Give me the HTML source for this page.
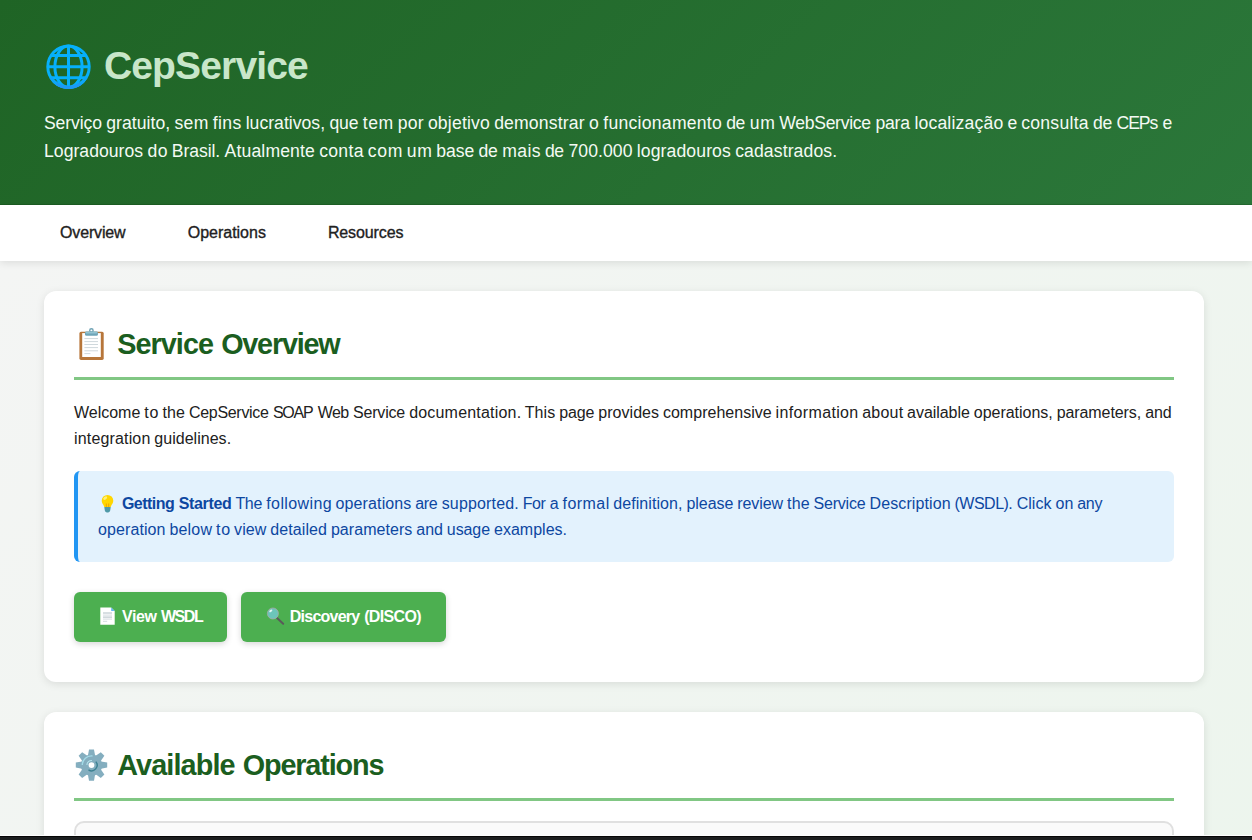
<!DOCTYPE html>
<html lang="en">
<head>
<meta charset="utf-8">
<title>CepService Web Service</title>
<style>
*{box-sizing:border-box;margin:0;padding:0}
html,body{width:1252px;height:840px;overflow:hidden}
body{font-family:"Liberation Sans",sans-serif;font-size:16px;line-height:25.6px;color:#212121;background:#eef5ef linear-gradient(135deg,#f5f5f5 0%,#e8f5e9 100%) 0 0/1252px 2050px no-repeat;position:relative}
.abs{position:absolute;white-space:nowrap}
svg{position:absolute;overflow:visible}
.header{position:absolute;left:0;top:0;width:1252px;height:205px;background:linear-gradient(135deg,#1f6425 0%,#2b773a 100%);color:#fff}
.header h1{left:0;top:40px;height:52px;line-height:52px;font-size:39px;font-weight:bold;color:#c8e6c9;}
.header p{left:44px;font-size:17.6px;line-height:28px;color:#f4faf4}
.nav{position:absolute;left:0;top:205px;width:1252px;height:56px;background:#fff;box-shadow:0 2px 8px rgba(0,0,0,.1)}
.nav a{top:15px;line-height:25.6px;font-size:16px;color:#212121;text-decoration:none;-webkit-text-stroke:.35px #212121}
.card{position:absolute;left:44px;width:1160px;background:#fff;border-radius:12px;box-shadow:0 2px 8px rgba(0,0,0,.1)}
.rule{position:absolute;left:30px;width:1100px;height:3px;background:#81c784}
h2{left:0;font-size:28.8px;line-height:46px;font-weight:bold;color:#1b5e20}
.info{position:absolute;left:30px;top:180px;width:1100px;height:91.2px;background:#e3f2fd;border-left:4px solid #2196f3;border-radius:6px;color:#0d47a1}
.btn{position:absolute;top:301.4px;height:49.6px;background:#4caf50;border-radius:6px;box-shadow:0 2px 6px rgba(0,0,0,.16);color:#fff;font-weight:bold;font-size:16px}
.btn span{top:12px;line-height:25.6px}
.op{position:absolute;left:30px;top:109px;width:1100px;height:120px;border:2px solid #e0e0e0;border-radius:10px;background:#fafafa}
.bar{position:absolute;left:0;top:836px;width:1252px;height:4px;background:#1b1d1e;border-top:1px solid #060606}
.barw{position:absolute;left:0;top:835px;width:1252px;height:1px;background:#fdfdfd}

.ln{left:0;width:0}.ln span{position:absolute;top:0;left:0}.ln .b{font-weight:bold}
</style>
</head>
<body>
<div class="header">
  <svg id="globe" style="left:44px;top:43px" width="48" height="48" viewBox="0 0 48 48"><g fill="none" stroke="#06b0fb" stroke-width="3"><circle cx="24.5" cy="23.7" r="20.7"/><ellipse cx="24.5" cy="23.7" rx="13.6" ry="20.7"/><path d="M24.5 3v41.4M3.8 23.7h41.4M7.2 12.6h34.6M7.2 34.8h34.6"/><path d="M6.57 34.05A20.7 20.7 0 0 0 42.43 34.05" stroke="#0ea6f8"/><path d="M12.63 40.66A20.7 20.7 0 0 0 36.37 40.66" stroke="#1e98f3"/></g></svg>
  <h1 class="abs ln"><span style="left:103.94px;letter-spacing:-0.853px">CepService</span></h1>
  <p class="abs ln" id="hp1" style="top:109px"><span style="left:0.00px;letter-spacing:-0.122px">Serviço</span> <span style="left:62.30px;letter-spacing:0.039px">gratuito,</span> <span style="left:130.53px;letter-spacing:0.305px">sem</span> <span style="left:168.73px;letter-spacing:0.393px">fins</span> <span style="left:201.66px;letter-spacing:0.019px">lucrativos,</span> <span style="left:285.39px;letter-spacing:-0.155px">que</span> <span style="left:318.78px;letter-spacing:0.593px">tem</span> <span style="left:353.66px;letter-spacing:0.226px">por</span> <span style="left:383.91px;letter-spacing:0.181px">objetivo</span> <span style="left:450.17px;letter-spacing:0.162px">demonstrar</span> <span style="left:544.95px;letter-spacing:0.000px">o</span> <span style="left:559.36px;letter-spacing:0.252px">funcionamento</span> <span style="left:682.16px;letter-spacing:-0.318px">de</span> <span style="left:705.77px;letter-spacing:0.687px">um</span> <span style="left:735.27px;letter-spacing:-0.305px">WebService</span> <span style="left:831.41px;letter-spacing:-0.190px">para</span> <span style="left:870.41px;letter-spacing:0.173px">localização</span> <span style="left:963.53px;letter-spacing:0.000px">e</span> <span style="left:977.22px;letter-spacing:0.261px">consulta</span> <span style="left:1048.94px;letter-spacing:-0.318px">de</span> <span style="left:1072.55px;letter-spacing:-1.115px">CEPs</span> <span style="left:1118.55px;letter-spacing:0.000px">e</span></p>
  <p class="abs ln" id="hp2" style="top:137px"><span style="left:0.00px;letter-spacing:0.034px">Logradouros</span> <span style="left:103.50px;letter-spacing:0.392px">do</span> <span style="left:127.81px;letter-spacing:-0.075px">Brasil.</span> <span style="left:180.61px;letter-spacing:0.133px">Atualmente</span> <span style="left:275.16px;letter-spacing:0.316px">conta</span> <span style="left:323.81px;letter-spacing:0.720px">com</span> <span style="left:362.84px;letter-spacing:0.687px">um</span> <span style="left:392.34px;letter-spacing:-0.092px">base</span> <span style="left:434.56px;letter-spacing:-0.308px">de</span> <span style="left:458.17px;letter-spacing:0.408px">mais</span> <span style="left:500.89px;letter-spacing:-0.298px">de</span> <span style="left:524.52px;letter-spacing:0.062px">700.000</span> <span style="left:592.84px;letter-spacing:0.104px">logradouros</span> <span style="left:691.14px;letter-spacing:0.114px">cadastrados.</span></p>
</div>
<div style="position:absolute;left:0;top:204px;width:1252px;height:1px;background:rgba(0,40,0,.17)"></div>
<div class="nav">
  <a class="abs ln" id="n1"><span style="left:60.00px;letter-spacing:-0.143px">Overview</span></a>
  <a class="abs ln" id="n2"><span style="left:187.69px;letter-spacing:-0.005px">Operations</span></a>
  <a class="abs ln" id="n3"><span style="left:327.91px;letter-spacing:-0.122px">Resources</span></a>
</div>
<div class="card" style="top:291px;height:391px">
  <svg id="clip" style="left:33px;top:35px" width="30" height="36" viewBox="0 0 30 36"><rect x="2.4" y="5.8" width="24.3" height="28.1" rx="1.6" fill="#b7763a"/><rect x="5.2" y="7.1" width="18.6" height="23.9" fill="#fff"/><g stroke="#cfd8dc" stroke-width="1"><path d="M7.4 12.6h13.6M7.4 15.6h13.6M7.4 18.5h13.6M7.4 21.6h13.6M7.4 24.8h13.6M7.4 27.6h6"/></g><circle cx="14.4" cy="4.500" r="1.700" fill="none" stroke="#6fa3b5" stroke-width="1.400"/><rect x="8" y="5.5" width="12.9" height="4.3" rx="1.4" fill="#6ea5b8"/><rect x="8.600" y="5.700" width="11.700" height="1.800" rx=".9" fill="#93c4d2"/></svg>
  <h2 class="abs ln" id="h2a" style="top:30px"><span style="left:73.16px;letter-spacing:-0.941px">Service</span> <span style="left:177.14px;letter-spacing:-1.221px">Overview</span></h2>
  <div class="rule" style="top:86px"></div>
  <div class="abs ln" id="p1" style="left:30px;top:109px"><span style="left:0.00px;letter-spacing:-0.008px">Welcome</span> <span style="left:70.31px;letter-spacing:0.866px">to</span> <span style="left:88.48px;letter-spacing:0.145px">the</span> <span style="left:114.98px;letter-spacing:-0.307px">CepService</span> <span style="left:198.88px;letter-spacing:-1.193px">SOAP</span> <span style="left:243.72px;letter-spacing:-0.585px">Web</span> <span style="left:279.11px;letter-spacing:-0.217px">Service</span> <span style="left:335.13px;letter-spacing:0.196px">documentation.</span> <span style="left:450.72px;letter-spacing:0.092px">This</span> <span style="left:485.20px;letter-spacing:-0.145px">page</span> <span style="left:524.33px;letter-spacing:0.027px">provides</span> <span style="left:588.95px;letter-spacing:0.017px">comprehensive</span> <span style="left:701.61px;letter-spacing:0.351px">information</span> <span style="left:788.23px;letter-spacing:0.208px">about</span> <span style="left:833.08px;letter-spacing:-0.050px">available</span> <span style="left:899.81px;letter-spacing:-0.026px">operations,</span> <span style="left:982.67px;letter-spacing:-0.080px">parameters,</span> <span style="left:1071.20px;letter-spacing:-0.062px">and</span></div>
  <div class="abs ln" id="p2" style="left:30px;top:134.6px"><span style="left:0.00px;letter-spacing:0.161px">integration</span> <span style="left:80.30px;letter-spacing:0.028px">guidelines.</span></div>
  <div class="info">
    <svg id="bulb" style="left:20px;top:22px" width="20" height="22" viewBox="0 0 20 22"><path d="M9.5 1.9a5.8 5.8 0 0 1 5.8 5.8c0 2.4-1.6 3.6-2.2 5.2l-.3 1.2H6.2l-.3-1.2C5.300 11.300 3.700 10.100 3.700 7.700A5.800 5.800 0 0 1 9.500 1.900z" fill="#ffd600"/><path d="M8.300 14v-3.500M10.700 14v-3.500" stroke="#f29900" stroke-width=".9"/><ellipse cx="7.200" cy="5.100" rx="2.200" ry="1.400" transform="rotate(-35 7.200 5.100)" fill="#fff176"/><path d="M6.300 14h6.400l-.5 3.600a2 2 0 0 1-2 1.800H8.800a2 2 0 0 1-2-1.800z" fill="#4f9aa8"/></svg>
    <div class="abs ln" id="i1" style="left:0;top:20px"><span class="b" style="left:43.97px;letter-spacing:-0.545px">Getting</span> <span class="b" style="left:100.67px;letter-spacing:-0.331px">Started</span> <span style="left:157.47px;letter-spacing:-0.369px">The</span> <span style="left:188.28px;letter-spacing:0.383px">following</span> <span style="left:257.58px;letter-spacing:0.115px">operations</span> <span style="left:337.30px;letter-spacing:-0.328px">are</span> <span style="left:363.72px;letter-spacing:0.149px">supported.</span> <span style="left:444.64px;letter-spacing:-0.380px">For</span> <span style="left:471.83px;letter-spacing:0.000px">a</span> <span style="left:484.50px;letter-spacing:0.459px">formal</span> <span style="left:535.20px;letter-spacing:0.085px">definition,</span> <span style="left:608.52px;letter-spacing:-0.069px">please</span> <span style="left:659.28px;letter-spacing:-0.085px">review</span> <span style="left:709.06px;letter-spacing:0.140px">the</span> <span style="left:735.56px;letter-spacing:-0.218px">Service</span> <span style="left:791.58px;letter-spacing:0.097px">Description</span> <span style="left:876.55px;letter-spacing:-0.518px">(WSDL).</span> <span style="left:938.73px;letter-spacing:0.005px">Click</span> <span style="left:977.38px;letter-spacing:0.163px">on</span> <span style="left:999.31px;letter-spacing:-0.343px">any</span></div>
    <div class="abs ln" id="i2" style="left:0;top:45.6px"><span style="left:20.00px;letter-spacing:0.098px">operation</span> <span style="left:91.45px;letter-spacing:0.177px">below</span> <span style="left:137.94px;letter-spacing:0.856px">to</span> <span style="left:156.11px;letter-spacing:0.048px">view</span> <span style="left:192.22px;letter-spacing:0.100px">detailed</span> <span style="left:252.92px;letter-spacing:0.055px">parameters</span> <span style="left:338.31px;letter-spacing:-0.067px">and</span> <span style="left:368.84px;letter-spacing:-0.086px">usage</span> <span style="left:416.06px;letter-spacing:0.010px">examples.</span></div>
  </div>
  <div class="btn" style="left:30px;width:153px">
    <svg id="page" style="left:24px;top:14px" width="20" height="22" viewBox="0 0 20 22"><path d="M2.300 1.600H13.200L16.700 5.100V18.700H2.300z" fill="#fff"/><path d="M13.200 1.600L16.700 5.100H13.200z" fill="#64b5f6"/><g stroke="#b0bec5" stroke-width="1"><path d="M5 7h9M5 11.100h9"/></g><g stroke="#cfd8dc" stroke-width=".9"><path d="M5 9.100h9M5 13.100h9M5 15.300h4.200"/></g></svg>
    <span class="abs ln" id="b1" style="left:0"><span style="left:47.97px;letter-spacing:-0.397px">View</span> <span style="left:86.92px;letter-spacing:-1.406px">WSDL</span></span>
  </div>
  <div class="btn" style="left:197px;width:205px">
    <svg id="mag" style="left:22px;top:14px" width="24" height="24" viewBox="0 0 24 24"><path d="M14.300 12.300L20.200 17.800" stroke="#5a5a5a" stroke-width="2" stroke-linecap="round"/><circle cx="9.900" cy="7.500" r="5.500" fill="#6cc5b9" stroke="#a8a8a8" stroke-width=".8"/><ellipse cx="7.800" cy="4.900" rx="1.800" ry="1" transform="rotate(-35 7.800 4.900)" fill="#e4f6f3"/></svg>
    <span class="abs ln" id="b2" style="left:0"><span style="left:48.75px;letter-spacing:-0.754px">Discovery</span> <span style="left:123.19px;letter-spacing:-0.646px">(DISCO)</span></span>
  </div>
</div>
<div class="card" style="top:712px;height:200px">
  <svg id="gear" style="left:30px;top:35px" width="36" height="36" viewBox="0 0 36 36"><g transform="translate(17.500 18.100)"><g fill="#84aebf"><path d="M-3.600 -9.500L-2.500 -15.700H2.500L3.600 -9.500z" transform="rotate(0)"/><path d="M-3.600 -9.500L-2.500 -15.700H2.500L3.600 -9.500z" transform="rotate(45)"/><path d="M-3.600 -9.500L-2.500 -15.700H2.500L3.600 -9.500z" transform="rotate(90)"/><path d="M-3.600 -9.500L-2.500 -15.700H2.500L3.600 -9.500z" transform="rotate(135)"/><path d="M-3.600 -9.500L-2.500 -15.700H2.500L3.600 -9.500z" transform="rotate(180)"/><path d="M-3.600 -9.500L-2.500 -15.700H2.500L3.600 -9.500z" transform="rotate(225)"/><path d="M-3.600 -9.500L-2.500 -15.700H2.500L3.600 -9.500z" transform="rotate(270)"/><path d="M-3.600 -9.500L-2.500 -15.700H2.500L3.600 -9.500z" transform="rotate(315)"/><circle r="10.700"/></g><path d="M-9.200 0A9.200 9.200 0 0 1 1 -9.150" fill="none" stroke="#a3dbe8" stroke-width="1.400"/><path d="M-4.600 0A4.600 4.600 0 0 1 .500 -4.570" fill="none" stroke="#b5e3ec" stroke-width="1.100"/><path d="M4.300 -3.500A5.600 5.600 0 0 1 -3 4.800" fill="none" stroke="#3c8192" stroke-width="1.400"/><circle r="2.900" fill="#fff"/></g></svg>
  <h2 class="abs ln" id="h2b" style="top:30px"><span style="left:73.16px;letter-spacing:-0.868px">Available</span> <span style="left:198.75px;letter-spacing:-1.150px">Operations</span></h2>
  <div class="rule" style="top:86px"></div>
  <div class="op"></div>
</div>
<div class="barw"></div>
<div class="bar"></div>
</body>
</html>
